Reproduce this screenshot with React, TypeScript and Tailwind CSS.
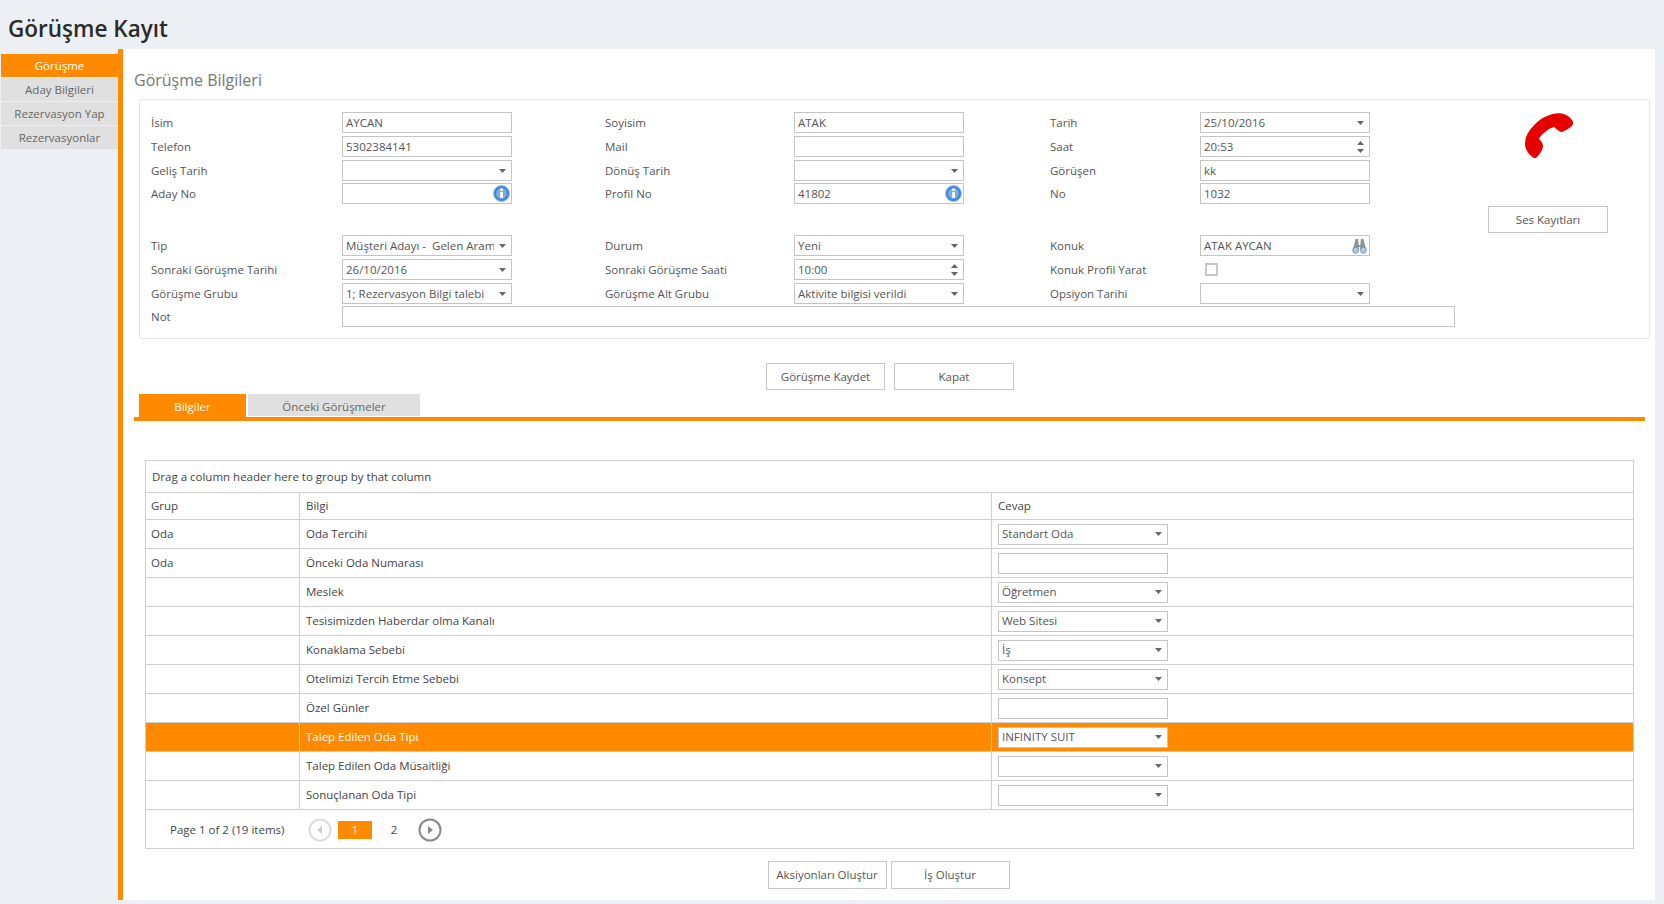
import React from "react";

type Kind = "text" | "select" | "spin" | "info" | "search";

function Caret({ up = false }: { up?: boolean }) {
  return (
    <svg width="7" height="4" viewBox="0 0 7 4" className={up ? "rotate-180" : ""}>
      <path d="M0 0h7L3.5 4z" fill="#666" />
    </svg>
  );
}

function InfoIcon() {
  return (
    <svg width="17" height="17" viewBox="0 0 17 17">
      <circle cx="8.5" cy="8.5" r="8" fill="#3f86d6" stroke="#9cc3ea" strokeWidth="1" />
      <circle cx="8.5" cy="8.5" r="5.4" fill="#78aee6" />
      <rect x="7.2" y="7" width="2.8" height="6" fill="#fff" />
      <rect x="7.2" y="3.6" width="2.8" height="2.3" fill="#fff" />
    </svg>
  );
}

function BinocularIcon() {
  return (
    <svg width="15" height="16" viewBox="0 0 15 16">
      <path d="M3.5 1h2.6l.6 6h1.6l.6-6h2.6l2.7 11H8.2V9H6.8v3H.8z" fill="#8c959c" />
      <ellipse cx="3.6" cy="12.2" rx="2.9" ry="3.1" fill="#a9cde8" stroke="#6d7982" strokeWidth="0.7" />
      <ellipse cx="11.4" cy="12.2" rx="2.9" ry="3.1" fill="#a9cde8" stroke="#6d7982" strokeWidth="0.7" />
    </svg>
  );
}

function Control({ value = "", kind = "text", className = "w-[170px]" }: { value?: string; kind?: Kind; className?: string }) {
  return (
    <div className={`h-[21px] flex items-center border border-[#c4c4c4] bg-white pl-[3px] text-[#555] ${className}`}>
      <span className="flex-1 overflow-hidden whitespace-pre">{value}</span>
      {kind === "select" && (
        <span className="w-[17px] shrink-0 flex justify-center">
          <Caret />
        </span>
      )}
      {kind === "spin" && (
        <span className="w-[17px] shrink-0 flex flex-col items-center gap-[4px]">
          <Caret up />
          <Caret />
        </span>
      )}
      {kind === "info" && (
        <span className="w-[19px] shrink-0 flex justify-center">
          <InfoIcon />
        </span>
      )}
      {kind === "search" && (
        <span className="w-[19px] shrink-0 flex justify-center">
          <BinocularIcon />
        </span>
      )}
    </div>
  );
}

function Btn({ children, className = "" }: { children: React.ReactNode; className?: string }) {
  return (
    <div className={`flex items-center justify-center border border-[#c8c8c8] bg-white text-[#555] ${className}`}>
      {children}
    </div>
  );
}

const sideItems = ["Aday Bilgileri", "Rezervasyon Yap", "Rezervasyonlar"];

type Cell = { label: string; value?: string; kind?: Kind };
const formRows: { mt: string; cells: Cell[] }[] = [
  {
    mt: "mt-0",
    cells: [
      { label: "İsim", value: "AYCAN" },
      { label: "Soyisim", value: "ATAK" },
      { label: "Tarih", value: "25/10/2016", kind: "select" },
    ],
  },
  {
    mt: "mt-[3px]",
    cells: [
      { label: "Telefon", value: "5302384141" },
      { label: "Mail" },
      { label: "Saat", value: "20:53", kind: "spin" },
    ],
  },
  {
    mt: "mt-[3px]",
    cells: [
      { label: "Geliş Tarih", kind: "select" },
      { label: "Dönüş Tarih", kind: "select" },
      { label: "Görüşen", value: "kk" },
    ],
  },
  {
    mt: "mt-[2px]",
    cells: [
      { label: "Aday No", kind: "info" },
      { label: "Profil No", value: "41802", kind: "info" },
      { label: "No", value: "1032" },
    ],
  },
  {
    mt: "mt-[31px]",
    cells: [
      { label: "Tip", value: "Müşteri Adayı -  Gelen Aram", kind: "select" },
      { label: "Durum", value: "Yeni", kind: "select" },
      { label: "Konuk", value: "ATAK AYCAN", kind: "search" },
    ],
  },
  {
    mt: "mt-[3px]",
    cells: [
      { label: "Sonraki Görüşme Tarihi", value: "26/10/2016", kind: "select" },
      { label: "Sonraki Görüşme Saati", value: "10:00", kind: "spin" },
      { label: "Konuk Profil Yarat", kind: "text", value: "__check" },
    ],
  },
  {
    mt: "mt-[3px]",
    cells: [
      { label: "Görüşme Grubu", value: "1; Rezervasyon Bilgi talebi", kind: "select" },
      { label: "Görüşme Alt Grubu", value: "Aktivite bilgisi verildi", kind: "select" },
      { label: "Opsiyon Tarihi", kind: "select" },
    ],
  },
];

const gridRows: { grup?: string; bilgi: string; value?: string; kind: Kind; active?: boolean }[] = [
  { grup: "Oda", bilgi: "Oda Tercihi", value: "Standart Oda", kind: "select" },
  { grup: "Oda", bilgi: "Önceki Oda Numarası", kind: "text" },
  { bilgi: "Meslek", value: "Öğretmen", kind: "select" },
  { bilgi: "Tesisimizden Haberdar olma Kanalı", value: "Web Sitesi", kind: "select" },
  { bilgi: "Konaklama Sebebi", value: "İş", kind: "select" },
  { bilgi: "Otelimizi Tercih Etme Sebebi", value: "Konsept", kind: "select" },
  { bilgi: "Özel Günler", kind: "text" },
  { bilgi: "Talep Edilen Oda Tipi", value: "INFINITY SUIT", kind: "select", active: true },
  { bilgi: "Talep Edilen Oda Müsaitliği", kind: "select" },
  { bilgi: "Sonuçlanan Oda Tipi", kind: "select" },
];

export default function App() {
  return (
    <div className="w-[1664px] h-[904px] overflow-hidden bg-[#ecf0f5] font-['Open_Sans',sans-serif] text-[11.5px] text-[#555]">
      <div className="h-[49px] pl-2 pt-[9px] text-[22.5px] leading-[40px] font-semibold text-[#2b2b2b]">Görüşme Kayıt</div>

      <div className="flex h-[851px] pr-[9px]">
        {/* side menu */}
        <div className="w-[118px] shrink-0 pt-[5px] pl-[1px] flex flex-col gap-[1px]">
          <div className="h-[23px] flex items-center justify-center bg-[#ff8a00] text-white">Görüşme</div>
          {sideItems.map((s) => (
            <div key={s} className="h-[23px] flex items-center justify-center bg-[#e0e0e0] text-[#666]">
              {s}
            </div>
          ))}
        </div>

        <div className="flex-1 border-l-[5px] border-[#ff8a00] bg-white pr-[6px] flex flex-col">
          <div className="pl-[11px] pt-[18px] h-[50px] text-[16px] leading-[26px] text-[#777]">Görüşme Bilgileri</div>

          {/* form card */}
          <div className="ml-[16px] -mr-px h-[240px] border border-[#e6e6e6] rounded-[3px] pl-[11px] pt-[12px] flex">
            <div className="w-[1304px] shrink-0">
              {formRows.map((row, i) => (
                <div
                  key={i}
                  className={`${row.mt} grid grid-cols-[191px_263px_189px_256px_150px_170px] items-center`}
                >
                  {row.cells.map((c) => (
                    <React.Fragment key={c.label}>
                      <div className="whitespace-nowrap">{c.label}</div>
                      {c.value === "__check" ? (
                        <div className="h-[21px] flex items-center pl-[5px]">
                          <div className="w-[13px] h-[13px] border-2 border-[#c8c8c8] bg-white" />
                        </div>
                      ) : (
                        <Control value={c.value} kind={c.kind} />
                      )}
                    </React.Fragment>
                  ))}
                </div>
              ))}
              <div className="mt-[2px] flex items-center">
                <div className="w-[191px]">Not</div>
                <Control className="w-[1114px]" />
              </div>
            </div>

            <div className="ml-[33px] w-[120px] flex flex-col items-center">
              <svg width="80" height="70" viewBox="0 0 80 70" className="-mt-[11px] ml-[5px]">
                <path
                  d="M23 57C19 55 14 49 14 43C14 37 16 33 19 29C23 24 28 18 36 15C42 12 50 11 55 14C59 16 63 20 62 23C60 27 55 29 51 31C48 31 46 28 43 26C39 27 36 29 33 32C30 34 28 37 28 38C30 40 32 42 32 45C32 49 28 54 25 57Z"
                  fill="#e60000"
                />
              </svg>
              <Btn className="mt-[35px] w-[120px] h-[27px]">Ses Kayıtları</Btn>
            </div>
          </div>

          <div className="mt-[24px] flex justify-center gap-[9px] pl-[8px]">
            <Btn className="w-[119px] h-[27px]">Görüşme Kaydet</Btn>
            <Btn className="w-[120px] h-[27px]">Kapat</Btn>
          </div>

          {/* tabs */}
          <div className="mt-[4px] ml-[11px] mr-[4px] border-b-[4px] border-[#ff8a00] h-[27px] pl-[5px] flex gap-[2px]">
            <div className="w-[107px] h-[23px] pt-[3px] flex items-center justify-center bg-[#ff8a00] text-white">Bilgiler</div>
            <div className="w-[172px] h-[22px] pt-[3px] flex items-center justify-center bg-[#e0e0e0] text-[#666]">Önceki Görüşmeler</div>
          </div>

          {/* grid */}
          <div className="mt-[39px] ml-[22px] w-[1489px] h-[389px] border border-[#cfcfcf] text-[#444] flex flex-col">
            <div className="h-[32px] shrink-0 flex items-center pl-[6px] border-b border-[#cfcfcf]">
              Drag a column header here to group by that column
            </div>
            <div className="h-[27px] shrink-0 grid grid-cols-[154px_692px_1fr] border-b border-[#cfcfcf]">
              <div className="flex items-center pl-[5px] border-r border-[#cfcfcf]">Grup</div>
              <div className="flex items-center pl-[6px] border-r border-[#cfcfcf]">Bilgi</div>
              <div className="flex items-center pl-[6px]">Cevap</div>
            </div>
            {gridRows.map((r) => (
              <div
                key={r.bilgi}
                className={`h-[29px] shrink-0 grid grid-cols-[154px_692px_1fr] border-b border-[#cfcfcf] ${r.active ? "bg-[#ff8a00] text-white" : ""}`}
              >
                <div className="flex items-center pl-[5px] border-r border-[#cfcfcf]">{r.grup}</div>
                <div className="flex items-center pl-[6px] border-r border-[#cfcfcf]">{r.bilgi}</div>
                <div className="flex items-center pl-[6px]">
                  <Control value={r.value} kind={r.kind} />
                </div>
              </div>
            ))}
            <div className="flex-1 pt-[2px] flex items-center pl-[24px]">
              <span className="w-[138px]">Page 1 of 2 (19 items)</span>
              <svg width="24" height="24" viewBox="0 0 24 24">
                <circle cx="12" cy="12" r="10.5" fill="none" stroke="#ddd" strokeWidth="2" />
                <path d="M14 8v8l-5-4z" fill="#ccc" />
              </svg>
              <div className="ml-[6px] w-[34px] h-[18px] flex items-center justify-center bg-[#ff8a00] text-white">1</div>
              <div className="ml-[5px] w-[34px] text-center">2</div>
              <svg width="24" height="24" viewBox="0 0 24 24" className="ml-[7px]">
                <circle cx="12" cy="12" r="10.5" fill="none" stroke="#888" strokeWidth="2" />
                <path d="M10 8v8l5-4z" fill="#888" />
              </svg>
            </div>
          </div>

          <div className="mt-[12px] flex justify-center gap-[4px] pl-[5px]">
            <Btn className="w-[119px] h-[28px]">Aksiyonları Oluştur</Btn>
            <Btn className="w-[119px] h-[28px]">İş Oluştur</Btn>
          </div>
        </div>
      </div>
    </div>
  );
}
